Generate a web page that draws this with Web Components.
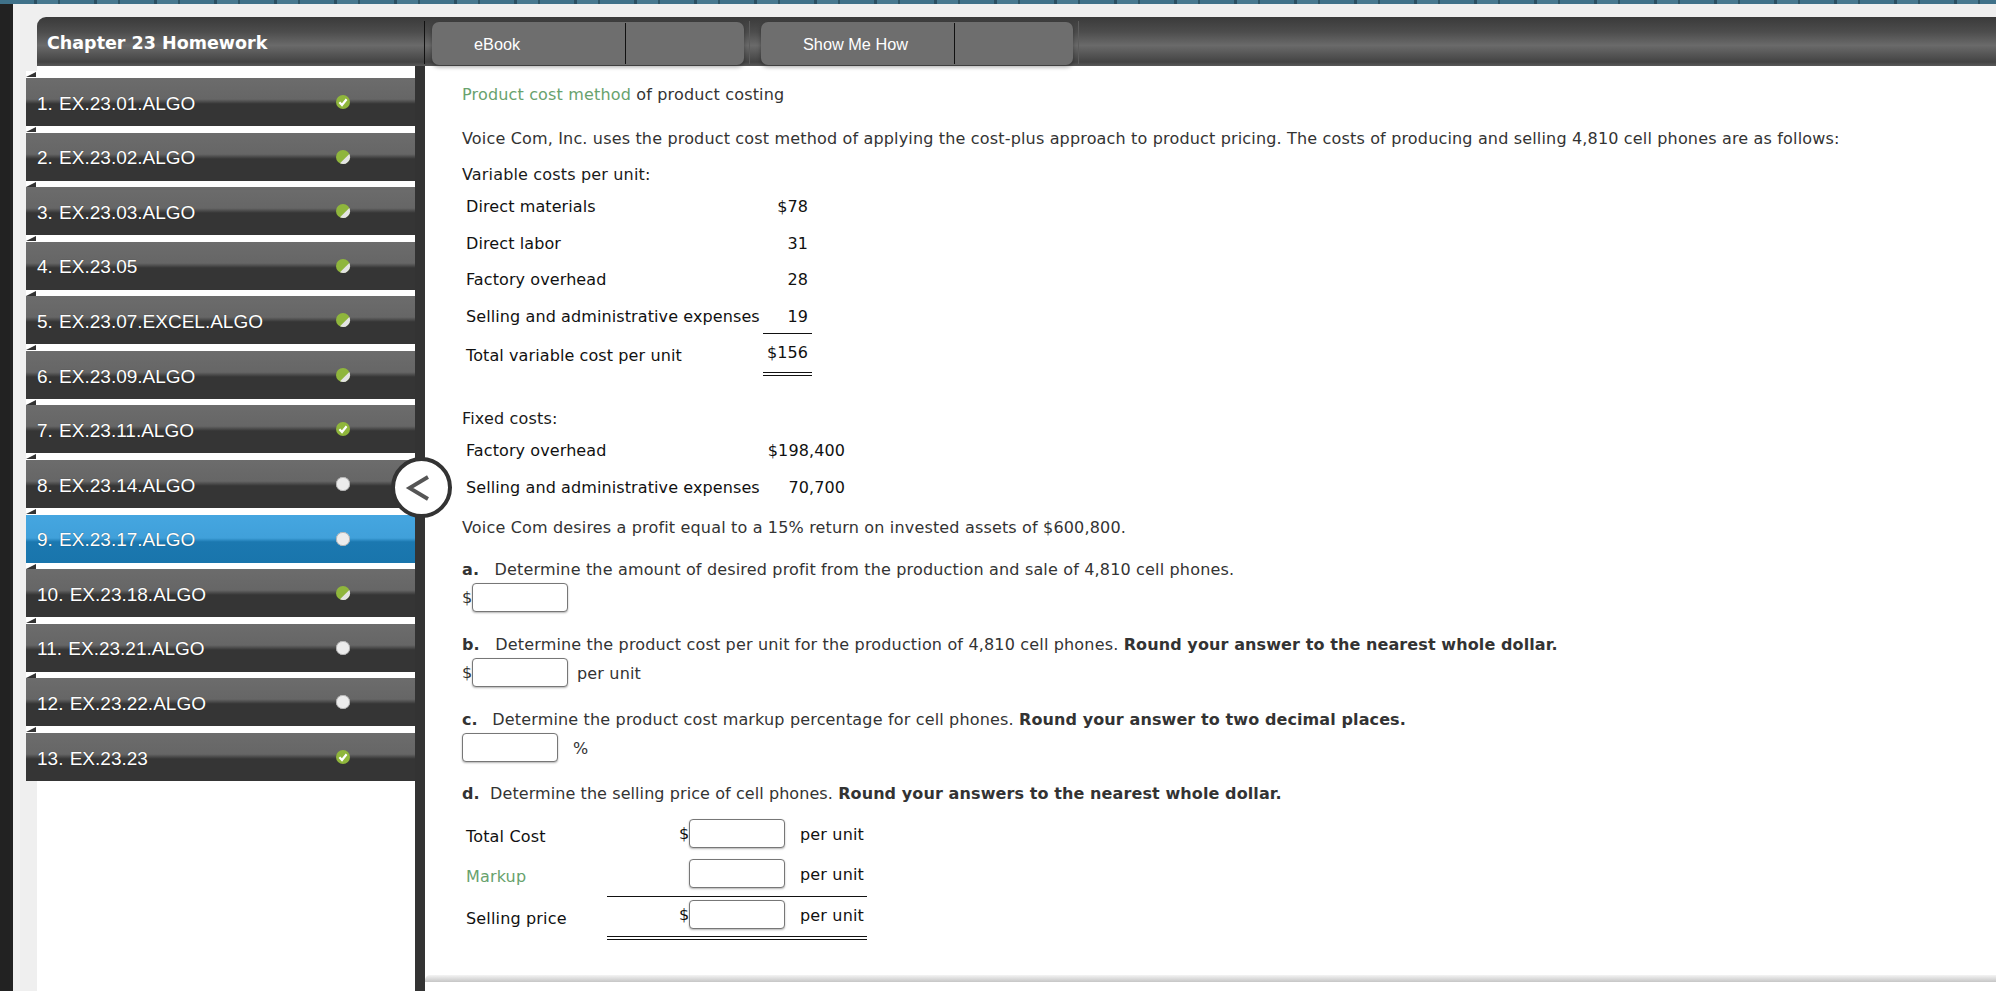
<!DOCTYPE html>
<html>
<head>
<meta charset="utf-8">
<title>Chapter 23 Homework</title>
<style>
  html, body { margin: 0; height: 100%; overflow: hidden; background: #efefef; }
  b { letter-spacing: .1px; }
  b.k5 { margin-right: 5px; }
  b.k4 { margin-right: 4px; }
</style>
</head>
<body>

<hw-app>
  <hw-header slot="header" title="Chapter 23 Homework">
    <hw-tab>eBook</hw-tab>
    <hw-tab>Show Me How</hw-tab>
  </hw-header>

  <hw-sidebar slot="sidebar">
    <hw-nav-item status="done">1. EX.23.01.ALGO</hw-nav-item>
    <hw-nav-item status="partial">2. EX.23.02.ALGO</hw-nav-item>
    <hw-nav-item status="partial">3. EX.23.03.ALGO</hw-nav-item>
    <hw-nav-item status="partial">4. EX.23.05</hw-nav-item>
    <hw-nav-item status="partial">5. EX.23.07.EXCEL.ALGO</hw-nav-item>
    <hw-nav-item status="partial">6. EX.23.09.ALGO</hw-nav-item>
    <hw-nav-item status="done">7. EX.23.11.ALGO</hw-nav-item>
    <hw-nav-item status="none">8. EX.23.14.ALGO</hw-nav-item>
    <hw-nav-item status="none" active>9. EX.23.17.ALGO</hw-nav-item>
    <hw-nav-item status="partial">10. EX.23.18.ALGO</hw-nav-item>
    <hw-nav-item status="none">11. EX.23.21.ALGO</hw-nav-item>
    <hw-nav-item status="none">12. EX.23.22.ALGO</hw-nav-item>
    <hw-nav-item status="done">13. EX.23.23</hw-nav-item>
  </hw-sidebar>

  <hw-toggle slot="toggle"></hw-toggle>

  <hw-question slot="main">
    <hw-par top="0"><hw-term>Product cost method</hw-term> of product costing</hw-par>
    <hw-par top="24">Voice Com, Inc. uses the product cost method of applying the cost-plus approach to product pricing. The costs of producing and selling 4,810 cell phones are as follows:</hw-par>
    <hw-par top="16" dark>Variable costs per unit:</hw-par>

    <hw-cost-row first="4" value-w="49" end="4" h="36.6">Direct materials<span slot="value">$78</span></hw-cost-row>
    <hw-cost-row value-w="49" end="4" h="36.6">Direct labor<span slot="value">31</span></hw-cost-row>
    <hw-cost-row value-w="49" end="4" h="36.6">Factory overhead<span slot="value">28</span></hw-cost-row>
    <hw-cost-row value-w="49" end="4" h="36.6" rule="single">Selling and administrative expenses<span slot="value">19</span></hw-cost-row>
    <hw-cost-row value-w="49" end="4" h="41.6" label-pad="12" rule="double">Total variable cost per unit<span slot="value">$156</span></hw-cost-row>

    <hw-par top="32" dark>Fixed costs:</hw-par>
    <hw-cost-row first="4" value-w="82" end="0" h="36.6">Factory overhead<span slot="value">$198,400</span></hw-cost-row>
    <hw-cost-row value-w="82" end="0" h="36.6">Selling and administrative expenses<span slot="value">70,700</span></hw-cost-row>
    <hw-par top="12">Voice Com desires a profit equal to a 15% return on invested assets of $600,800.</hw-par>

    <hw-par top="22"><b class="k5">a.</b>&nbsp;&nbsp;Determine the amount of desired profit from the production and sale of 4,810 cell phones.</hw-par>
    <hw-answer prefix="$"></hw-answer>

    <hw-par top="22"><b class="k5">b.</b>&nbsp;&nbsp;Determine the product cost per unit for the production of 4,810 cell phones. <b>Round your answer to the nearest whole dollar.</b></hw-par>
    <hw-answer prefix="$">per unit</hw-answer>

    <hw-par top="22"><b class="k4">c.</b>&nbsp;&nbsp;Determine the product cost markup percentage for cell phones. <b>Round your answer to two decimal places.</b></hw-par>
    <hw-answer gap="15">%</hw-answer>

    <hw-par top="21" tight><b>d.</b>&nbsp;&nbsp;Determine the selling price of cell phones. <b>Round your answers to the nearest whole dollar.</b></hw-par>

    <hw-price-grid>
      <hw-price-row prefix="$" h="44" pad="4" label-pad="12">Total Cost</hw-price-row>
      <hw-price-row h="38" pad="0" label-pad="8" rule="single"><hw-term>Markup</hw-term></hw-price-row>
      <hw-price-row prefix="$" h="43" pad="3" label-pad="12" rule="double">Selling price</hw-price-row>
    </hw-price-grid>
  </hw-question>
</hw-app>

<script>
  const FONT_BODY = '"DejaVu Sans", Verdana, sans-serif';
  const FONT_NAV = '"Liberation Sans", Arial, sans-serif';

  // root layout: strip on top, black edge on the left, header + sidebar + main
  class HwApp extends HTMLElement {
    constructor() {
      super();
      this.attachShadow({ mode: 'open' });
      this.shadowRoot.innerHTML = `
      <style>
        :host { display: block; height: 991px; background: #222; position: relative; overflow: hidden; }
        #strip {
          height: 4px;
          background: repeating-linear-gradient(90deg, #3f7189 0 34px, #2b4f62 34px 37px, #47788f 37px 58px, #2f5567 58px 60px);
        }
        #page { margin-left: 13px; height: 987px; background: #efefef; padding-top: 13px; box-sizing: border-box; display: flex; flex-direction: column; }
        #head { margin-left: 24px; position: relative; z-index: 2; }
        #body { flex: 1; display: flex; min-height: 0; margin-left: 13px; position: relative; }
        #side { width: 389px; flex: none; }
        #bar { width: 10px; flex: none; background: #333; }
        #main { flex: 1; min-width: 0; background: #fff; display: flex; flex-direction: column; }
        #scroll { flex: 1; min-height: 0; }
        #foot { height: 7px; margin-bottom: 9px; flex: none; border-top-left-radius: 5px; background: linear-gradient(#f4f4f4, #c6c6c6); }
        #toggle { position: absolute; left: 364.5px; top: 391px; z-index: 3; }
      </style>
      <div id="strip"></div>
      <div id="page">
        <div id="head"><slot name="header"></slot></div>
        <div id="body">
          <div id="side"><slot name="sidebar"></slot></div>
          <div id="bar"></div>
          <div id="main">
            <div id="scroll"><slot name="main"></slot></div>
            <div id="foot"></div>
          </div>
          <div id="toggle"><slot name="toggle"></slot></div>
        </div>
      </div>`;
    }
  }

  class HwHeader extends HTMLElement {
    constructor() {
      super();
      this.attachShadow({ mode: 'open' });
      this.shadowRoot.innerHTML = `
      <style>
        :host {
          display: flex; height: 49px; align-items: stretch;
          border-top-left-radius: 9px;
          background: linear-gradient(#3a3a3a 0, #4c4c4c 30%, #6a6a6a 58%, #4a4a4a 86%, #444 92%, #5a5a5a 100%);
        }
        #title {
          width: 378px; padding-left: 10px; flex: none; box-sizing: content-box;
          font: bold 17.5px/52px ${FONT_BODY}; color: #fff; white-space: nowrap;
          position: relative;
        }
        #title::after { content: ""; position: absolute; right: 0; top: 4px; bottom: 2px; width: 1px; background: #111; }
        #tabs { display: flex; padding-left: 7px; }
      </style>
      <div id="title"></div>
      <div id="tabs"><slot></slot></div>`;
      this.shadowRoot.querySelector('#title').textContent = this.getAttribute('title');
    }
  }

  class HwTab extends HTMLElement {
    constructor() {
      super();
      this.attachShadow({ mode: 'open' });
      this.shadowRoot.innerHTML = `
      <style>
        :host { display: flex; padding: 5px 0 1px; margin-right: 17px; position: relative; }
        :host::after { content: ""; position: absolute; right: -6px; top: 4px; bottom: 2px; width: 1px; background: #5c5c5c; }
        #btn {
          width: 312px; height: 43px; display: flex; border-radius: 7px; background: #6e6e6e;
          box-shadow: 0 2px 4px rgba(0,0,0,.35);
          font: 16.3px/42px ${FONT_NAV}; color: #fff;
        }
        #label { width: 151px; padding-left: 42px; border-right: 1px solid #111; white-space: nowrap; height: 41px; margin-top: 1px; line-height: 42px; }
      </style>
      <div id="btn"><div id="label"><slot></slot></div></div>`;
    }
  }

  class HwSidebar extends HTMLElement {
    constructor() {
      super();
      this.attachShadow({ mode: 'open' });
      this.shadowRoot.innerHTML = `
      <style>
        :host { display: block; height: 100%; padding-top: 5.4px; box-sizing: border-box; background: linear-gradient(90deg, #efefef 11px, #fff 11px); }
      </style>
      <slot></slot>`;
    }
  }

  const DOTS = {
    done: `<circle cx="8" cy="8" r="7" fill="#8fb63c"/><path d="M4.4 8.2l2.6 2.8 4.6-5.8" fill="none" stroke="#fff" stroke-width="2.2"/>`,
    partial: `<circle cx="8" cy="8" r="7" fill="#8fb63c"/><path d="M14.3 5a7 7 0 0 1-9.3 9.3z" fill="#e4e4e4"/>`,
    none: `<circle cx="8" cy="8" r="7" fill="#ececec"/><circle cx="8" cy="8" r="6.6" fill="none" stroke="#aaa" stroke-width=".8"/>`
  };

  class HwNavItem extends HTMLElement {
    constructor() {
      super();
      this.attachShadow({ mode: 'open' });
      const status = this.getAttribute('status') || 'none';
      this.shadowRoot.innerHTML = `
      <style>
        :host { display: block; padding-top: 6.58px; background: #fff; position: relative; }
        :host::before {
          content: ""; position: absolute; left: 0; top: 1px; width: 0; height: 0;
          border-left: 10px solid transparent; border-bottom: 5.5px solid #333;
        }
        #row {
          height: 48px; display: flex; padding-left: 11px; position: relative;
          background: linear-gradient(#6c6c6c 0, #666 44%, #353535 54%, #353535 100%);
          font: 19px/24px ${FONT_NAV}; word-spacing: 1px; color: #fff; white-space: nowrap;
          text-shadow: 0 0 1px rgba(0,0,0,.5);
        }
        :host([active]) #row { background: linear-gradient(#45a6e0 0, #40a0da 48%, #1b78b0 56%, #1975ac 100%); }
        #text { padding-top: 13.7px; }
        svg { position: absolute; left: 309.4px; top: 16px; }
      </style>
      <div id="row">
        <div id="text"><slot></slot></div>
        <svg width="16" height="16" viewBox="0 0 16 16">${DOTS[status]}</svg>
      </div>`;
    }
  }

  class HwToggle extends HTMLElement {
    constructor() {
      super();
      this.attachShadow({ mode: 'open' });
      this.shadowRoot.innerHTML = `
      <style>
        :host { display: block; width: 61px; height: 61px; }
      </style>
      <svg width="61" height="61" viewBox="0 0 61 61">
        <circle cx="30.5" cy="30.5" r="28.5" fill="#fff" stroke="#333" stroke-width="4"/>
        <path d="M37 20L18.5 31 37 42" fill="none" stroke="#555" stroke-width="3.8"/>
      </svg>`;
    }
  }

  class HwQuestion extends HTMLElement {
    constructor() {
      super();
      this.attachShadow({ mode: 'open' });
      this.shadowRoot.innerHTML = `
      <style>
        :host { display: block; padding: 18px 0 0 37px; font: 16px/20px ${FONT_BODY}; letter-spacing: .165px; color: #333; }
      </style>
      <slot></slot>`;
    }
  }

  class HwPar extends HTMLElement {
    constructor() {
      super();
      this.attachShadow({ mode: 'open' });
      this.shadowRoot.innerHTML = `
      <style>
        :host { display: block; height: 20px; line-height: 22px; white-space: nowrap; margin-top: ${this.getAttribute('top') || 0}px; }
        :host([dark]) { color: #1a1a1a; }
        :host([tight]) { letter-spacing: .08px; }
      </style>
      <slot></slot>`;
    }
  }

  class HwTerm extends HTMLElement {
    constructor() {
      super();
      this.attachShadow({ mode: 'open' });
      this.shadowRoot.innerHTML = `<style>:host { color: #68a26d; }</style><slot></slot>`;
    }
  }

  class HwCostRow extends HTMLElement {
    constructor() {
      super();
      this.attachShadow({ mode: 'open' });
      const h = this.getAttribute('h');
      const rule = this.getAttribute('rule');
      const line = rule === 'double' ? 'border-bottom: 4px double #111;' : rule === 'single' ? 'border-bottom: 1px solid #111;' : '';
      this.shadowRoot.innerHTML = `
      <style>
        :host { display: flex; height: ${h}px; align-items: flex-start; padding-left: 4px; margin-top: ${this.getAttribute('first') || 0}px; color: #111; white-space: nowrap; letter-spacing: .1px; }
        #label { width: 297px; flex: none; padding-top: ${this.getAttribute('label-pad') || 9}px; }
        #value { width: ${this.getAttribute('value-w')}px; box-sizing: border-box; text-align: right; padding: 9px ${this.getAttribute('end')}px 0 0; height: 100%; ${line} }
      </style>
      <div id="label"><slot></slot></div>
      <div id="value"><slot name="value"></slot></div>`;
    }
  }

  class HwInput extends HTMLElement {
    constructor() {
      super();
      this.attachShadow({ mode: 'open' });
      this.shadowRoot.innerHTML = `
      <style>
        :host { display: block; flex: none; width: 96px; height: 29px; }
        input {
          width: 100%; height: 100%; box-sizing: border-box; margin: 0; padding: 0 4px;
          border: 1px solid #777; border-radius: 4px; background: #fff; outline: 0;
          box-shadow: 0 1px 2px rgba(0,0,0,.3);
        }
      </style>
      <input type="text" aria-label="answer">`;
    }
  }

  class HwAnswer extends HTMLElement {
    constructor() {
      super();
      this.attachShadow({ mode: 'open' });
      const prefix = this.getAttribute('prefix');
      this.shadowRoot.innerHTML = `
      <style>
        :host { display: flex; align-items: center; height: 29px; margin-top: 4px; white-space: nowrap; }
        #pre { width: 10px; flex: none; overflow: visible; }
        #post { margin-left: ${this.getAttribute('gap') || 9}px; padding-top: 3px; }
      </style>
      ${prefix ? `<div id="pre">${prefix}</div>` : ''}
      <hw-input></hw-input>
      <div id="post"><slot></slot></div>`;
    }
  }

  class HwPriceGrid extends HTMLElement {
    constructor() {
      super();
      this.attachShadow({ mode: 'open' });
      this.shadowRoot.innerHTML = `
      <style>:host { display: block; margin-top: 12px; padding-left: 4px; color: #111; }</style>
      <slot></slot>`;
    }
  }

  class HwPriceRow extends HTMLElement {
    constructor() {
      super();
      this.attachShadow({ mode: 'open' });
      const prefix = this.getAttribute('prefix');
      const rule = this.getAttribute('rule');
      const line = rule === 'double' ? 'border-bottom: 4px double #111;' : rule === 'single' ? 'border-bottom: 1px solid #111;' : '';
      this.shadowRoot.innerHTML = `
      <style>
        :host { display: flex; height: ${this.getAttribute('h')}px; white-space: nowrap; }
        #label { width: 141px; flex: none; padding-top: ${this.getAttribute('label-pad')}px; box-sizing: border-box; }
        #cell { width: 260px; flex: none; box-sizing: border-box; display: flex; align-items: flex-start; padding: ${this.getAttribute('pad')}px 0 0 72px; ${line} }
        #pre { width: 10px; flex: none; height: 29px; line-height: 29px; }
        #post { margin-left: 15px; height: 29px; line-height: 31px; }
      </style>
      <div id="label"><slot></slot></div>
      <div id="cell">
        <div id="pre">${prefix || ''}</div>
        <hw-input></hw-input>
        <div id="post">per unit</div>
      </div>`;
    }
  }

  customElements.define('hw-app', HwApp);
  customElements.define('hw-header', HwHeader);
  customElements.define('hw-tab', HwTab);
  customElements.define('hw-sidebar', HwSidebar);
  customElements.define('hw-nav-item', HwNavItem);
  customElements.define('hw-toggle', HwToggle);
  customElements.define('hw-question', HwQuestion);
  customElements.define('hw-par', HwPar);
  customElements.define('hw-term', HwTerm);
  customElements.define('hw-cost-row', HwCostRow);
  customElements.define('hw-input', HwInput);
  customElements.define('hw-answer', HwAnswer);
  customElements.define('hw-price-grid', HwPriceGrid);
  customElements.define('hw-price-row', HwPriceRow);
</script>
</body>
</html>
